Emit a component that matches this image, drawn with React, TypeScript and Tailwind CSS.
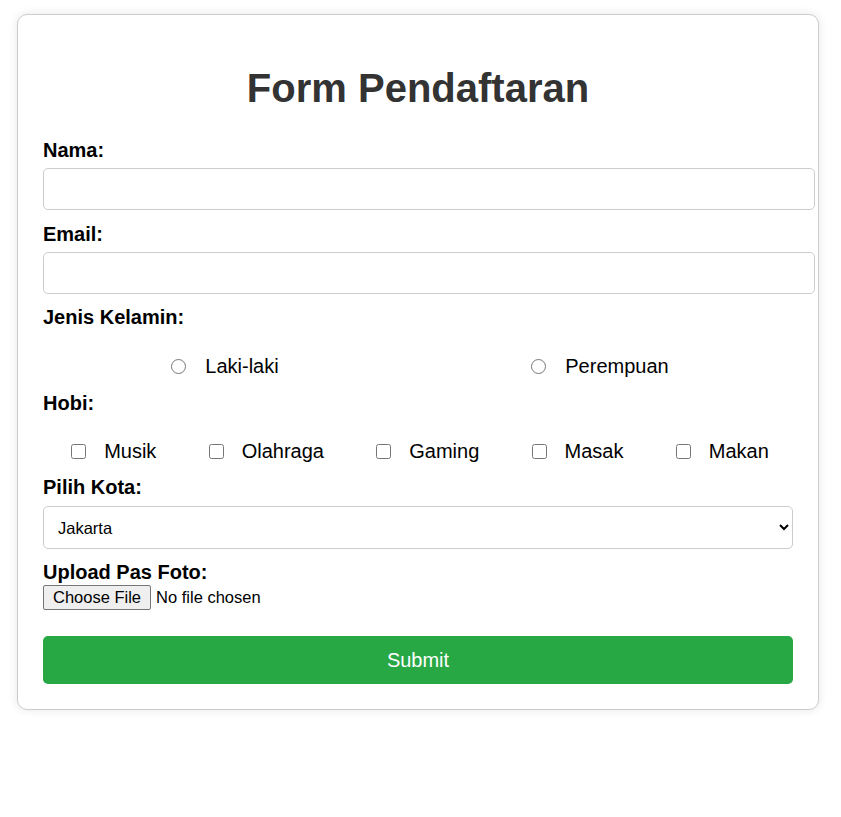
import React from 'react';

const hobbies = ['Musik', 'Olahraga', 'Gaming', 'Masak', 'Makan'];
const genders = ['Laki-laki', 'Perempuan'];

function FieldLabel({ children, className = '' }: { children: React.ReactNode; className?: string }) {
  return (
    <label className={`block text-[20px] leading-[23px] font-bold text-black ${className}`}>{children}</label>
  );
}

export default function App() {
  return (
    <div className="min-h-[817px] bg-white pt-[14px] pl-[17px] font-['Liberation_Sans',Arial,sans-serif]">
      <form
        className="w-[802px] rounded-[10px] border border-[#cccccc] bg-white p-[25px] shadow-[0_0_10px_rgba(0,0,0,0.1)]"
        onSubmit={(e) => e.preventDefault()}
      >
        <h2 className="mt-[25px] text-center text-[40px] leading-[46px] font-bold text-[#333333]">Form Pendaftaran</h2>

        <FieldLabel className="mt-[28px]">Nama:</FieldLabel>
        <input type="text" className="mt-[6px] block h-[42px] w-[772px] rounded-[5px] border border-[#cccccc] px-[10px] text-[16px]" />

        <FieldLabel className="mt-[13px]">Email:</FieldLabel>
        <input type="email" className="mt-[6px] block h-[42px] w-[772px] rounded-[5px] border border-[#cccccc] px-[10px] text-[16px]" />

        <FieldLabel className="mt-[12px]">Jenis Kelamin:</FieldLabel>
        <div className="mt-[26px] flex h-[23px] items-center justify-around">
          {genders.map((g) => (
            <label key={g} className="flex items-center text-[20px] leading-[23px] text-black">
              <input type="radio" name="gender" className="ml-[4px] mr-[2px] h-[15px] w-[15px]" />
              <span className="ml-[17px]">{g}</span>
            </label>
          ))}
        </div>

        <FieldLabel className="mt-[14px]">Hobi:</FieldLabel>
        <div className="mt-[25px] flex h-[23px] items-center justify-around">
          {hobbies.map((h) => (
            <label key={h} className="flex items-center text-[20px] leading-[23px] text-black">
              <input type="checkbox" className="ml-[4px] mr-[2px] h-[15px] w-[15px]" />
              <span className="ml-[16px]">{h}</span>
            </label>
          ))}
        </div>

        <FieldLabel className="mt-[13px]">Pilih Kota:</FieldLabel>
        <select className="mt-[7px] block h-[43px] w-full rounded-[5px] border border-[#cccccc] bg-white px-[10px] text-[16.5px] text-black">
          <option>Jakarta</option>
          <option>Bandung</option>
          <option>Surabaya</option>
          <option>Yogyakarta</option>
        </select>

        <FieldLabel className="mt-[12px]">Upload Pas Foto:</FieldLabel>
        <input
          type="file"
          className="mt-[1px] block h-[25px] text-[16.5px] leading-[19px] text-black file:mr-[5px] file:h-[25px] file:rounded-[2px] file:border file:border-[#767676] file:bg-[#efefef] file:px-[9px] file:text-black"
        />

        <button
          type="submit"
          className="mt-[26px] block h-[48px] w-full rounded-[5px] bg-[#28a745] text-[20px] text-white"
        >
          Submit
        </button>
      </form>
    </div>
  );
}
